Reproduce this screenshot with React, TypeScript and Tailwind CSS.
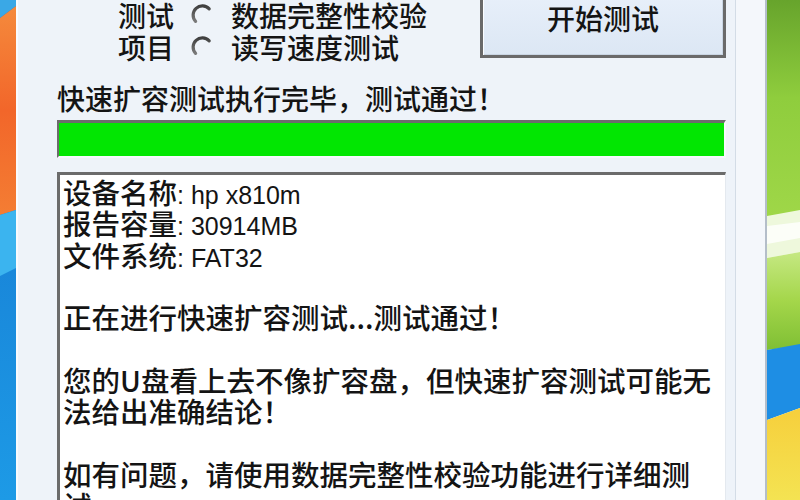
import React from "react";

const cjk = "font-['Noto_Sans_CJK_SC','Liberation_Sans',sans-serif]";
const lat = "font-['Liberation_Sans','Noto_Sans_CJK_SC',sans-serif] text-[25px] leading-none";

function Radio() {
  return (
    <svg width="22" height="22" viewBox="0 0 22 22" className="shrink-0">
      <defs>
        <linearGradient id="rg" x1="0" y1="0" x2="0" y2="1">
          <stop offset="0" stopColor="#3f3f3f" />
          <stop offset="1" stopColor="#7a7a7a" />
        </linearGradient>
      </defs>
      <path d="M18.2 4.8 A9 9 0 1 0 4.6 17.4" fill="none" stroke="url(#rg)" strokeWidth="3.2" strokeLinecap="round" />
    </svg>
  );
}

function LeftWall() {
  return (
    <svg width="16" height="500" viewBox="0 0 16 500" className="shrink-0 block">
      <defs>
        <linearGradient id="og" x1="0" y1="0" x2="0" y2="1">
          <stop offset="0" stopColor="#f58a3c" />
          <stop offset="0.5" stopColor="#f2662a" />
          <stop offset="1" stopColor="#f47d33" />
        </linearGradient>
        <linearGradient id="bg2" x1="0" y1="0" x2="0" y2="1">
          <stop offset="0" stopColor="#1572cc" />
          <stop offset="1" stopColor="#1d9ae6" />
        </linearGradient>
      </defs>
      <rect x="0" y="0" width="16" height="500" fill="url(#bg2)" />
      <path d="M0 0 H16 V6 L0 18 Z" fill="#3aa8e6" />
      <path d="M0 18 L16 6 V210 L0 215 Z" fill="url(#og)" />
      <path d="M0 215 L16 210 V268 L0 276 Z" fill="#3bb4ef" />
    </svg>
  );
}

function RightWall() {
  return (
    <svg width="33" height="500" viewBox="0 0 33 500" className="shrink-0 block">
      <defs>
        <linearGradient id="gg" x1="0" y1="0" x2="0" y2="1">
          <stop offset="0" stopColor="#67a42c" />
          <stop offset="0.45" stopColor="#8fcd3d" />
          <stop offset="1" stopColor="#9fd748" />
        </linearGradient>
        <linearGradient id="gg2" x1="0" y1="0" x2="0" y2="1">
          <stop offset="0" stopColor="#c5e882" />
          <stop offset="0.5" stopColor="#a4d64a" />
          <stop offset="1" stopColor="#7fbf34" />
        </linearGradient>
        <linearGradient id="yg" x1="0" y1="0" x2="0" y2="1">
          <stop offset="0" stopColor="#f6cf3c" />
          <stop offset="1" stopColor="#f4e352" />
        </linearGradient>
      </defs>
      <rect x="0" y="0" width="33" height="218" fill="url(#gg)" />
      <path d="M0 216 L33 210 V252 L0 258 Z" fill="#eef8dc" />
      <path d="M0 226 L33 222 V238 L0 244 Z" fill="#ffffff" opacity="0.8" />
      <path d="M0 258 L33 252 V346 L0 350 Z" fill="url(#gg2)" />
      <path d="M0 350 L33 344 V408 L0 420 Z" fill="#1e8ee4" />
      <path d="M0 420 L33 408 V500 H0 Z" fill="url(#yg)" />
    </svg>
  );
}

export default function App() {
  return (
    <div className={`w-[800px] h-[500px] overflow-hidden flex text-[#141414] ${cjk}`}>
      <LeftWall />
      <div className="w-[2px] shrink-0 bg-[#f9fbfe]" />
      <div className="flex-1 bg-[#eef3f9] pl-[39px] pr-[9px] overflow-hidden">
        <div className="-mt-[22px] h-[80px] flex justify-between">
          <div className="ml-[61px] pt-[21px] flex text-[28px] font-medium">
            <div className="flex flex-col">
              <div className="h-[32px] leading-[32px]">测试</div>
              <div className="h-[32px] leading-[32px]">项目</div>
            </div>
            <div className="flex flex-col ml-[17px]">
              <div className="h-[32px] flex items-center gap-[18px]">
                <Radio />
                <span className="leading-[32px]">数据完整性校验</span>
              </div>
              <div className="h-[32px] flex items-center gap-[18px]">
                <Radio />
                <span className="leading-[32px]">读写速度测试</span>
              </div>
            </div>
          </div>
          <div className="w-[246px] h-[80px] border-[3px] border-[#6a6a6a] bg-gradient-to-b from-[#eaf1fb] to-[#dce7f4] shadow-[inset_1px_1px_0_#fbfdff,inset_-1px_-1px_0_#c9d5e3] flex items-center justify-center text-[28px] font-medium">
            开始测试
          </div>
        </div>
        <div className="mt-[25px] h-[30px] leading-[30px] text-[28px] font-medium whitespace-nowrap">
          快速扩容测试执行完毕，测试通过！
        </div>
        <div className="mt-[7px] h-[38px] border-t-[3px] border-l-[2px] border-[#6c6c6c] border-r-[2px] border-r-[#f6f9fd] border-b-[2px] border-b-[#f6f9fd] bg-[#02e602]" />
        <div className="mt-[14px] h-[400px] border-t-[3px] border-l-[3px] border-[#6b6b6b] border-r-[1px] border-r-[#e4e9ef] bg-white pl-[3px] pt-[1px] text-[28.5px] leading-[31.3px] font-medium whitespace-nowrap [&>div]:h-[31.3px]">
          <div>设备名称<span className={lat}>: hp x810m</span></div>
          <div>报告容量<span className={lat}>: 30914MB</span></div>
          <div>文件系统<span className={lat}>: FAT32</span></div>
          <div>&nbsp;</div>
          <div>正在进行快速扩容测试...测试通过！</div>
          <div>&nbsp;</div>
          <div>您的U盘看上去不像扩容盘，但快速扩容测试可能无</div>
          <div>法给出准确结论！</div>
          <div>&nbsp;</div>
          <div>如有问题，请使用数据完整性校验功能进行详细测</div>
          <div>试。</div>
        </div>
      </div>
      <div className="w-[32px] shrink-0 bg-[#f4f7fb] border-l border-l-[#d3dce6] border-r-2 border-r-[#b4bec9]" />
      <RightWall />
    </div>
  );
}
